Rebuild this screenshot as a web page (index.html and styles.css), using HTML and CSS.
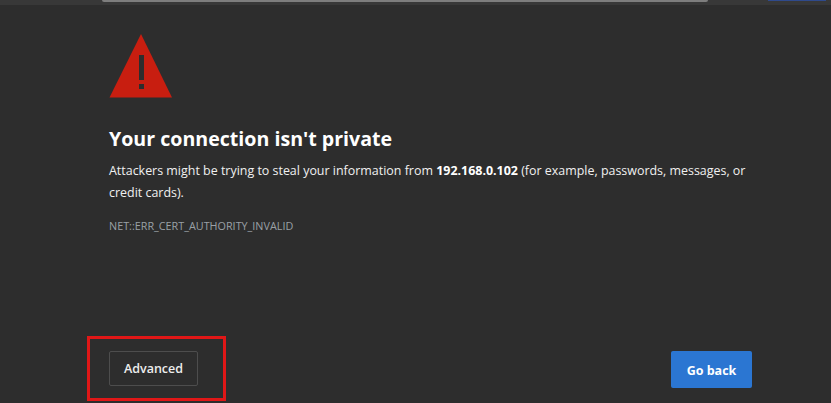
FILE: index.html
```html
<!DOCTYPE html>
<html lang="en">
<head>
    <meta charset="UTF-8">
    <meta name="viewport" content="width=device-width, initial-scale=1.0">
    <title>Privacy error</title>
    <link rel="stylesheet" href="styles.css">
</head>
<body>
    <div class="toolbar">
        <div class="address-bar"></div>
        <div class="profile-button"></div>
    </div>

    <div class="interstitial">
        <div class="warning">
            <svg class="warning-icon" width="63" height="64" viewBox="0 0 63 64">
                <path fill="#c81e10" d="M32 0 L63 63.5 L0.5 63.5 Z"/>
                <rect fill="#2d2d2d" x="30" y="21" width="5" height="25"/>
                <rect fill="#2d2d2d" x="30" y="50" width="5" height="5"/>
            </svg>
            <h1>Your connection isn't private</h1>
            <p class="message">Attackers might be trying to steal your information from <strong>192.168.0.102</strong> (for example, passwords, messages, or credit cards).</p>
            <p class="error-code">NET::ERR_CERT_AUTHORITY_INVALID</p>
        </div>

        <div class="actions">
            <div class="advanced-wrap">
                <button class="btn btn-advanced">Advanced</button>
                <div class="highlight"></div>
            </div>
            <button class="btn btn-back">Go back</button>
        </div>
    </div>
</body>
</html>
```

FILE: styles.css
```css
* {
    margin: 0;
    padding: 0;
    box-sizing: border-box;
}

html, body {
    height: 100%;
}

body {
    font-family: "Open Sans", "Noto Sans", sans-serif;
    background: #2d2d2d;
    color: #fff;
    display: flex;
    flex-direction: column;
    overflow: hidden;
}

/* Strip of browser chrome left at the top */
.toolbar {
    height: 5px;
    background: #383838;
    display: flex;
    justify-content: space-between;
    padding: 0 5px 0 102px;
}

.address-bar {
    width: 606px;
    height: 2px;
    background: #7d7d7d;
    border-radius: 0 0 3px 3px;
}

.profile-button {
    width: 58px;
    height: 1px;
    background: #2f4a8c;
}

.interstitial {
    flex: 1;
    display: flex;
    flex-direction: column;
    justify-content: space-between;
    padding: 29px 79px 15px 109px;
}

.warning-icon {
    display: block;
    margin-bottom: 26px;
}

h1 {
    font-size: 19.6px;
    font-weight: 700;
    line-height: 30px;
    margin-bottom: 6px;
}

.message {
    font-size: 12.45px;
    line-height: 22px;
    color: #f0f0f0;
}

.message strong {
    font-weight: 700;
    color: #fff;
}

.error-code {
    font-size: 10.8px;
    line-height: 16px;
    color: #9aa0a6;
    margin-top: 14px;
}

.actions {
    display: flex;
    justify-content: space-between;
    align-items: flex-start;
}

.advanced-wrap {
    position: relative;
}

/* Red annotation drawn over the screenshot */
.highlight {
    position: absolute;
    top: -15px;
    right: -28px;
    bottom: -15px;
    left: -22px;
    border: 3.5px solid #e01717;
}

.btn {
    display: block;
    font-family: inherit;
    font-size: 12.5px;
    border-radius: 2px;
    cursor: pointer;
}

.btn-advanced {
    width: 89px;
    height: 35px;
    background: transparent;
    border: 1px solid #4d4d4d;
    color: #ededed;
    font-weight: 600;
}

.btn-back {
    width: 81px;
    height: 37px;
    padding-top: 1px;
    background: #2b76d2;
    border: none;
    color: #fff;
    font-weight: 700;
}
```
